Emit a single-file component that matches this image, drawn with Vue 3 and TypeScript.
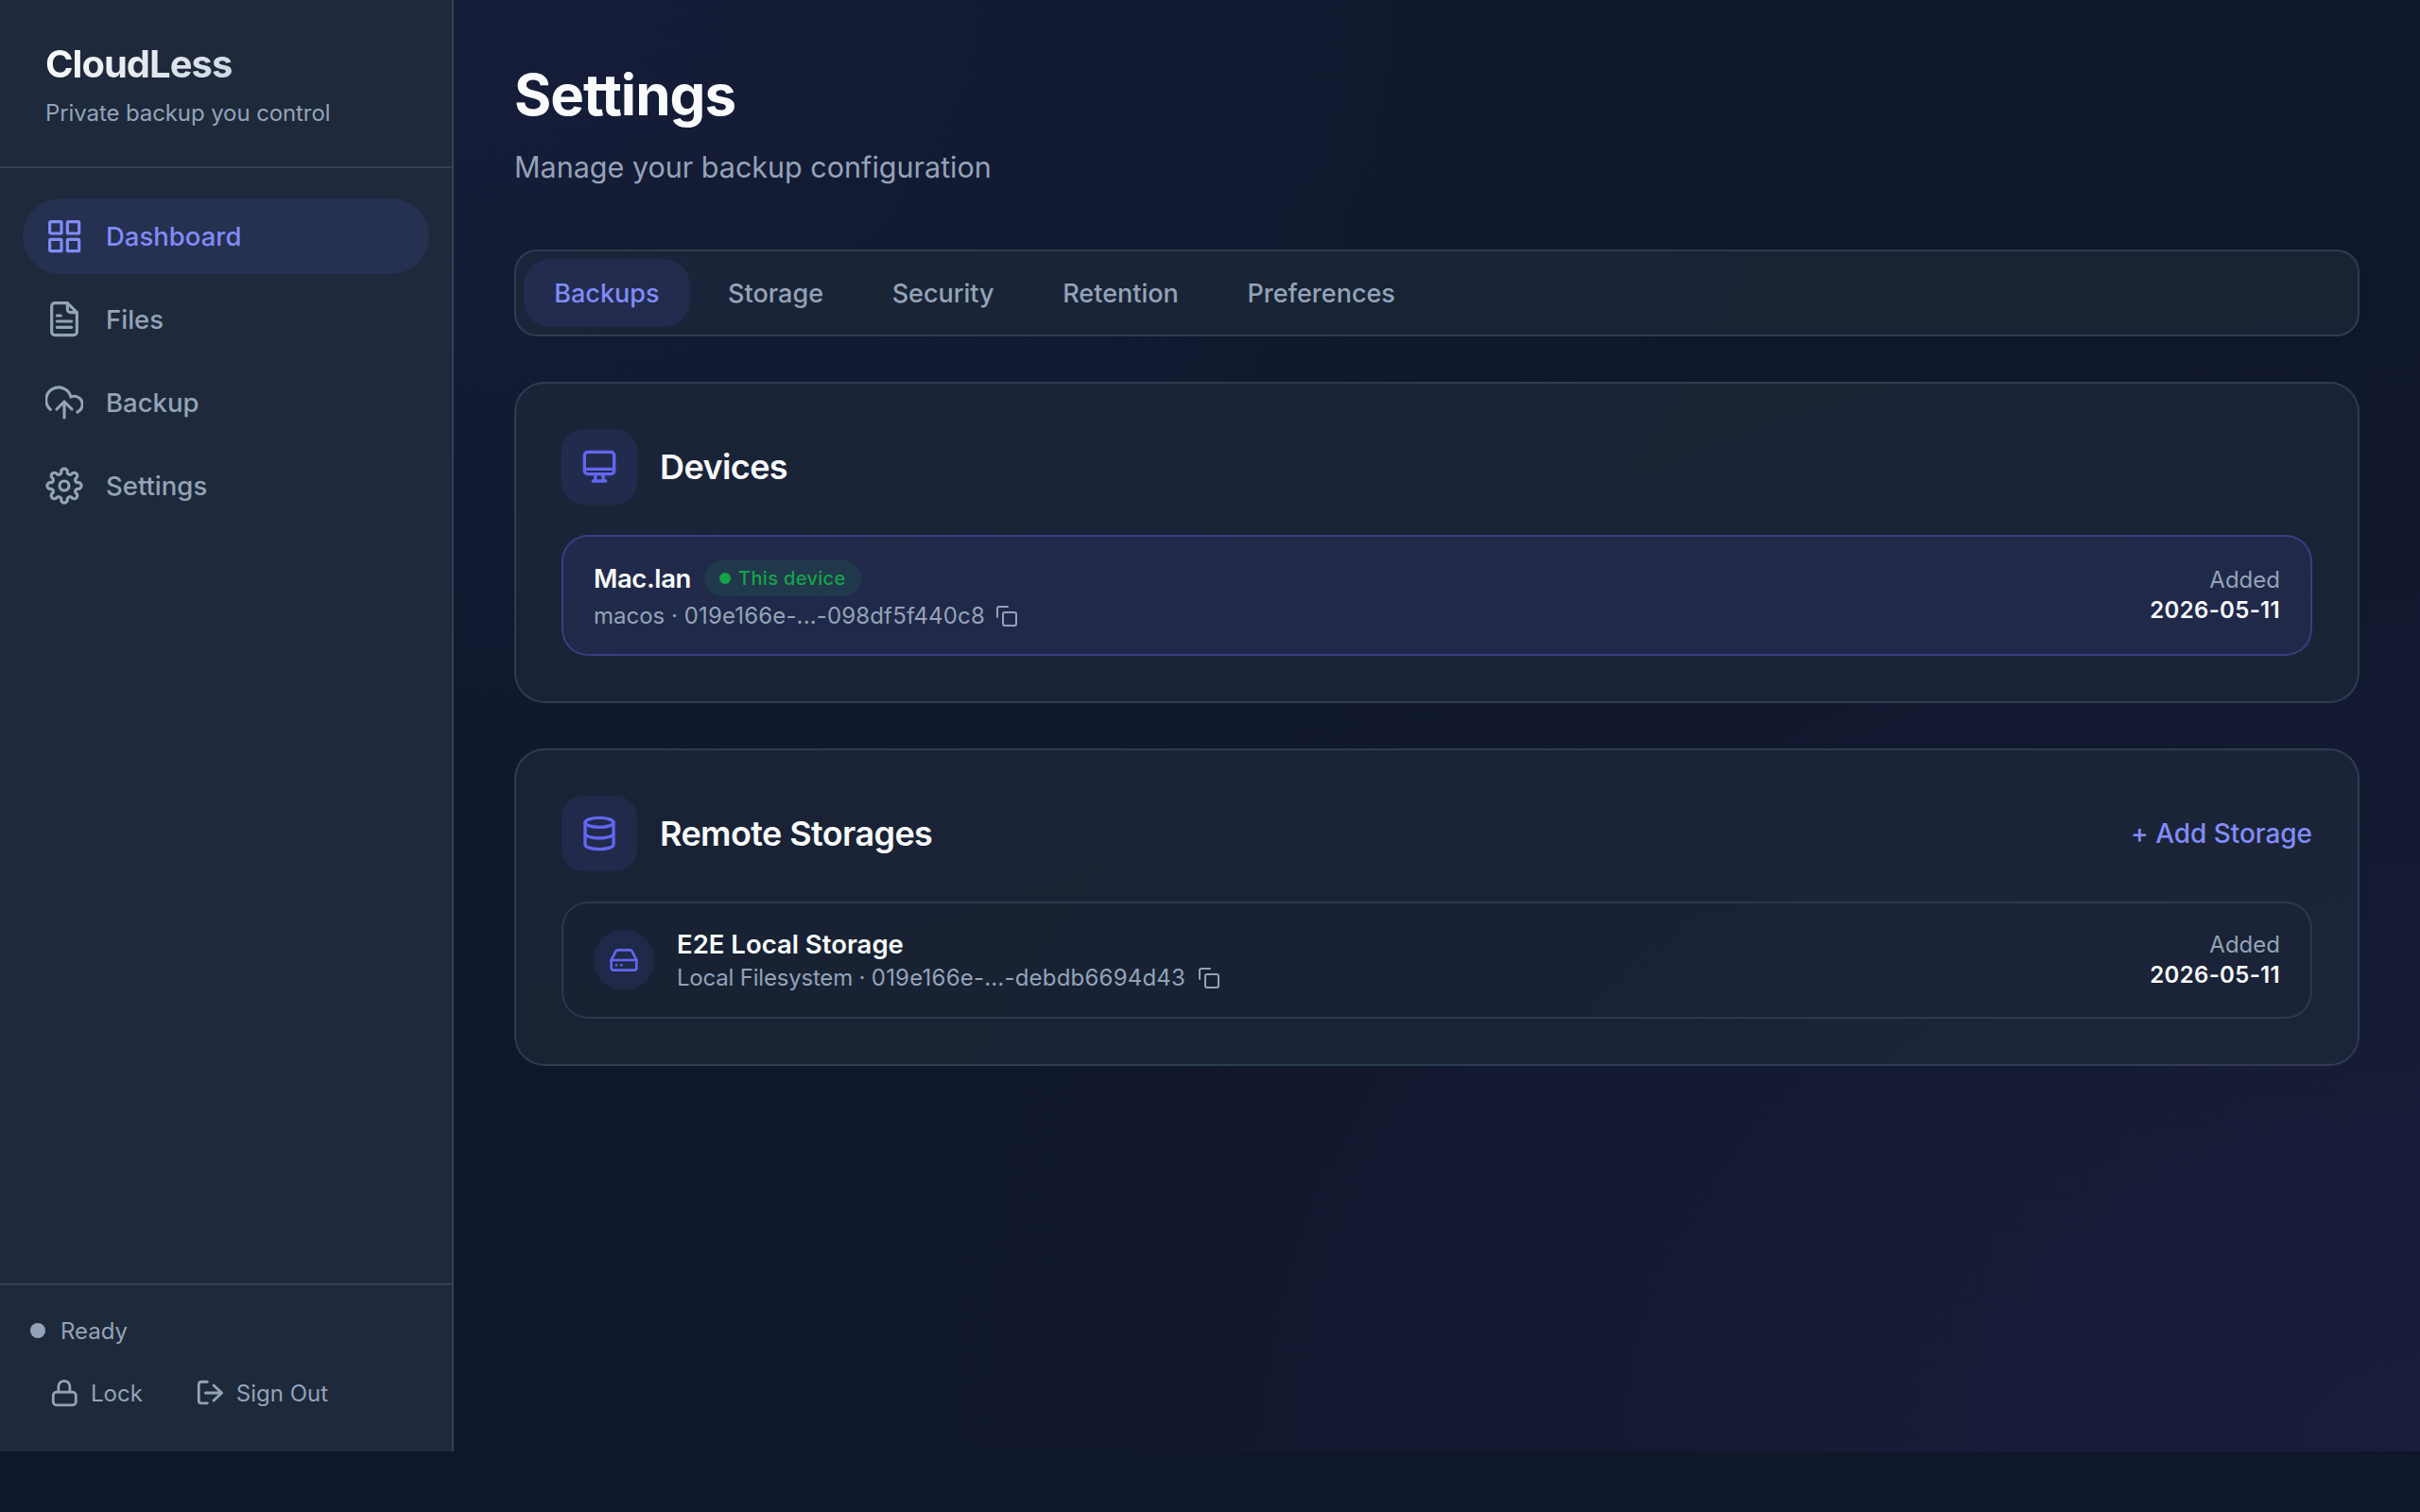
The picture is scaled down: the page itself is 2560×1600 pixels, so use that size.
<script setup lang="ts">
// 8 lobed gear outline, built from arcs around the centre of a 24 box
const polar = (deg: number, r: number) => {
  const a = (deg * Math.PI) / 180
  return `${(12 + r * Math.cos(a)).toFixed(2)} ${(12 + r * Math.sin(a)).toFixed(2)}`
}

const gearPath = () => {
  let d = ''
  for (let i = 0; i < 8; i++) {
    const mid = -90 + i * 45
    d += i === 0 ? `M${polar(mid - 13, 8.5)}` : ''
    d += `A2 2 0 1 1 ${polar(mid + 13, 8.5)}`
    d += `A1.8 1.8 0 0 0 ${polar(mid + 32, 8.5)}`
  }
  return d + 'Z'
}

const tabs = ['Backups', 'Storage', 'Security', 'Retention', 'Preferences']
</script>

<template>
  <div class="app">
    <aside class="sidebar">
      <div class="brand">
        <div class="brand-name">CloudLess</div>
        <div class="brand-sub">Private backup you control</div>
      </div>

      <nav class="nav">
        <a class="nav-item active">
          <svg class="nav-icon" viewBox="0 0 24 24" fill="none" stroke="currentColor" stroke-width="1.9" stroke-linejoin="round">
            <rect x="2.8" y="2.8" width="7.4" height="7.4" rx="0.6" />
            <rect x="14" y="2.8" width="7.4" height="7.4" rx="0.6" />
            <rect x="2.8" y="14" width="7.4" height="7.4" rx="0.6" />
            <rect x="14" y="14" width="7.4" height="7.4" rx="0.6" />
          </svg>
          <span>Dashboard</span>
        </a>
        <a class="nav-item">
          <svg class="nav-icon" viewBox="0 0 24 24" fill="none" stroke="currentColor" stroke-width="1.9" stroke-linecap="round" stroke-linejoin="round">
            <path d="M14 1.6H6a2 2 0 0 0-2 2V20a2 2 0 0 0 2 2h12a2 2 0 0 0 2-2V7.6Z" />
            <path d="M14 1.6v4a2 2 0 0 0 2 2h4" />
            <path d="M7.4 9.6h2.4M7.4 13.2h9.2M7.4 17h9.2" />
          </svg>
          <span>Files</span>
        </a>
        <a class="nav-item">
          <svg class="nav-icon" viewBox="0 0 24 24" fill="none" stroke="currentColor" stroke-width="1.9" stroke-linecap="round" stroke-linejoin="round">
            <path d="M3.2 16.4A8 8 0 1 1 16.2 8.4 5 5 0 0 1 20.4 18" />
            <path d="M12 21.6V11.4M7.2 16.2 12 11.4l4.8 4.8" />
          </svg>
          <span>Backup</span>
        </a>
        <a class="nav-item">
          <svg class="nav-icon" viewBox="0 0 24 24" fill="none" stroke="currentColor" stroke-width="1.9" stroke-linecap="round" stroke-linejoin="round">
            <path :d="gearPath()" />
            <circle cx="12" cy="12" r="3" />
          </svg>
          <span>Settings</span>
        </a>
      </nav>

      <div class="side-footer">
        <div class="status">
          <span class="status-dot"></span>
          <span>Ready</span>
        </div>
        <div class="side-actions">
          <button class="side-btn">
            <svg class="side-icon" viewBox="0 0 24 24" fill="none" stroke="currentColor" stroke-width="2.1" stroke-linecap="round" stroke-linejoin="round">
              <rect x="3.2" y="11.4" width="18" height="10.2" rx="2.5" />
              <path d="M7.4 11.4V7a4.5 4.5 0 0 1 9 0v4.4" />
            </svg>
            <span>Lock</span>
          </button>
          <button class="side-btn">
            <svg class="side-icon" viewBox="0 0 24 24" fill="none" stroke="currentColor" stroke-width="2.1" stroke-linecap="round" stroke-linejoin="round">
              <path d="M10 3.2H5.2a2 2 0 0 0-2 2v12.9a2 2 0 0 0 2 2H10" />
              <path d="M8.5 12h13M15 6l6.5 6-6.5 6" />
            </svg>
            <span>Sign Out</span>
          </button>
        </div>
      </div>
    </aside>

    <main class="main">
      <header class="page-head">
        <h1>Settings</h1>
        <p>Manage your backup configuration</p>
      </header>

      <div class="tabs">
        <button v-for="(tab, i) in tabs" :key="tab" class="tab" :class="{ active: i === 0 }">{{ tab }}</button>
      </div>

      <section class="card">
        <div class="card-head">
          <div class="card-icon">
            <svg viewBox="0 0 24 24" fill="none" stroke="currentColor" stroke-width="2" stroke-linecap="round" stroke-linejoin="round">
              <rect x="2.6" y="2.6" width="18.8" height="14" rx="2" />
              <path d="M2.6 13.4h18.8M9.8 16.6 9.2 21M14.2 16.6l.6 4.4M8 21h8" />
            </svg>
          </div>
          <h2>Devices</h2>
        </div>
        <div class="row current">
          <div class="row-info">
            <div class="row-title">
              <span class="row-name">Mac.lan</span>
              <span class="badge"><i class="badge-dot"></i>This device</span>
            </div>
            <div class="row-sub">
              <span><span class="sub-label">macos · </span><span class="sub-id">019e166e-...-098df5f440c8</span></span>
              <svg class="copy" viewBox="0 0 24 24" fill="none" stroke="currentColor" stroke-width="2" stroke-linecap="round" stroke-linejoin="round">
                <rect x="8" y="8" width="14" height="14" rx="2" />
                <path d="M2 13V4a2 2 0 0 1 2-2h9" />
              </svg>
            </div>
          </div>
          <div class="row-date">
            <span>Added</span>
            <strong>2026-05-11</strong>
          </div>
        </div>
      </section>

      <section class="card">
        <div class="card-head">
          <div class="card-icon">
            <svg viewBox="0 0 24 24" fill="none" stroke="currentColor" stroke-width="2" stroke-linecap="round" stroke-linejoin="round">
              <ellipse cx="12" cy="5" rx="9" ry="3" />
              <path d="M3 5v14a9 3 0 0 0 18 0V5" />
              <path d="M3 12a9 3 0 0 0 18 0" />
            </svg>
          </div>
          <h2>Remote Storages</h2>
          <button class="add-btn">+ Add Storage</button>
        </div>
        <div class="row">
          <div class="row-icon">
            <svg viewBox="0 0 24 24" fill="none" stroke="currentColor" stroke-width="2" stroke-linecap="round" stroke-linejoin="round">
              <path d="M22 12H2" />
              <path d="M5.45 5.11 2 12v6a2 2 0 0 0 2 2h16a2 2 0 0 0 2-2v-6l-3.45-6.89A2 2 0 0 0 16.76 4H7.24a2 2 0 0 0-1.79 1.11Z" />
              <path d="M6 16h.01M10 16h.01" />
            </svg>
          </div>
          <div class="row-info">
            <div class="row-name">E2E Local Storage</div>
            <div class="row-sub">
              <span><span class="sub-label tight">Local Filesystem · </span><span class="sub-id">019e166e-...-debdb6694d43</span></span>
              <svg class="copy" viewBox="0 0 24 24" fill="none" stroke="currentColor" stroke-width="2" stroke-linecap="round" stroke-linejoin="round">
                <rect x="8" y="8" width="14" height="14" rx="2" />
                <path d="M2 13V4a2 2 0 0 1 2-2h9" />
              </svg>
            </div>
          </div>
          <div class="row-date">
            <span>Added</span>
            <strong>2026-05-11</strong>
          </div>
        </div>
      </section>
    </main>
  </div>
</template>

<style>
html,
body {
  margin: 0;
  background: #0f172a;
}
</style>

<style scoped>
.app {
  display: flex;
  height: 1536px;
  font-family: Inter, 'Liberation Sans', sans-serif;
  color: #f1f5f9;
}

.sidebar {
  width: 480px;
  flex-shrink: 0;
  box-sizing: border-box;
  display: flex;
  flex-direction: column;
  background: #1e293b;
  border-right: 2px solid #334155;
}

.brand {
  box-sizing: border-box;
  height: 178px;
  padding: 40px 48px 0;
  border-bottom: 2px solid #334155;
}

.brand-name {
  font-size: 40px;
  line-height: 56px;
  font-weight: 700;
  letter-spacing: -1px;
  background: linear-gradient(135deg, #ffffff, #cbd5e1);
  -webkit-background-clip: text;
  background-clip: text;
  color: transparent;
  width: fit-content;
}

.brand-sub {
  margin-top: 4px;
  font-size: 24px;
  line-height: 40px;
  letter-spacing: -0.1px;
  color: #94a3b8;
}

.nav {
  flex: 1;
  display: flex;
  flex-direction: column;
  gap: 8px;
  padding: 32px 24px;
}

.nav-item {
  display: flex;
  align-items: center;
  gap: 24px;
  height: 80px;
  padding: 0 24px;
  border-radius: 40px;
  font-size: 27.5px;
  font-weight: 500;
  color: #94a3b8;
}

.nav-item.active {
  background: rgba(99, 102, 241, 0.12);
  color: #818cf8;
}

.nav-icon {
  width: 40px;
  height: 40px;
  flex-shrink: 0;
}

.side-footer {
  box-sizing: border-box;
  height: 178px;
  padding: 32px 32px 0;
  border-top: 2px solid #334155;
}

.status {
  display: flex;
  align-items: center;
  gap: 16px;
  height: 32px;
  font-size: 24px;
  color: #94a3b8;
}

.status-dot {
  width: 16px;
  height: 16px;
  border-radius: 50%;
  background: #94a3b8;
}

.side-actions {
  display: flex;
  gap: 15px;
  margin-top: 26px;
}

.side-btn {
  display: flex;
  align-items: center;
  gap: 12px;
  height: 48px;
  padding: 0 20px;
  border: none;
  background: none;
  font-family: inherit;
  font-size: 24px;
  color: #94a3b8;
}

.side-icon {
  width: 32px;
  height: 32px;
}

.main {
  flex: 1;
  min-width: 0;
  box-sizing: border-box;
  padding: 64px;
  background:
    radial-gradient(ellipse 70% 70% at 0% 0%, rgba(99, 102, 241, 0.08), transparent 100%),
    radial-gradient(ellipse 80% 80% at 100% 100%, rgba(139, 92, 246, 0.09), transparent 100%),
    #0f172a;
}

.page-head {
  margin-bottom: 63px;
}

.page-head h1 {
  margin: 0;
  font-size: 60px;
  line-height: 72px;
  font-weight: 700;
  letter-spacing: -1px;
  color: #f8fafc;
}

.page-head p {
  margin: 17px 0 0;
  font-size: 30.5px;
  line-height: 48px;
  color: #94a3b8;
}

.tabs {
  display: flex;
  gap: 8px;
  padding: 8px;
  margin-bottom: 48px;
  border: 2px solid rgba(51, 65, 85, 0.85);
  border-radius: 24px;
  background: rgba(30, 41, 59, 0.65);
}

.tab {
  height: 72px;
  padding: 0 32.3px;
  border: none;
  border-radius: 28px;
  background: none;
  font-family: inherit;
  font-size: 27px;
  font-weight: 500;
  color: #94a3b8;
}

.tab.active {
  background: rgba(99, 102, 241, 0.12);
  color: #818cf8;
}

.card {
  padding: 48px;
  margin-bottom: 48px;
  border: 2px solid rgba(51, 65, 85, 0.85);
  border-radius: 32px;
  background: rgba(30, 41, 59, 0.65);
}

.card-head {
  display: flex;
  align-items: center;
  gap: 24px;
  margin-bottom: 32px;
}

.card-icon {
  display: flex;
  align-items: center;
  justify-content: center;
  width: 80px;
  height: 80px;
  border-radius: 24px;
  background: rgba(99, 102, 241, 0.12);
  color: #6366f1;
}

.card-icon svg {
  width: 40px;
  height: 40px;
}

.card-head h2 {
  margin: 0;
  font-size: 36px;
  font-weight: 600;
  letter-spacing: -0.6px;
  color: #f8fafc;
}

.add-btn {
  margin-left: auto;
  padding: 0;
  border: none;
  background: none;
  font-family: inherit;
  font-size: 28px;
  font-weight: 500;
  letter-spacing: -0.05px;
  color: #818cf8;
}

.row {
  display: flex;
  align-items: center;
  gap: 24px;
  padding: 25px 32px;
  border: 2px solid rgba(51, 65, 85, 0.75);
  border-radius: 28px;
  background: rgba(15, 23, 42, 0.05);
}

.row.current {
  padding: 25px 32px 24px;
  background: rgba(99, 102, 241, 0.1);
  border-color: rgba(99, 102, 241, 0.35);
}

.row-icon {
  display: flex;
  align-items: center;
  justify-content: center;
  width: 64px;
  height: 64px;
  flex-shrink: 0;
  border-radius: 50%;
  background: rgba(99, 102, 241, 0.12);
  color: #6366f1;
}

.row-icon svg {
  width: 32px;
  height: 32px;
}

.row-info {
  flex: 1;
  min-width: 0;
}

.row-title {
  display: flex;
  align-items: center;
  gap: 14px;
}

.row-name {
  font-size: 27.5px;
  line-height: 36px;
  font-weight: 600;
  color: #f8fafc;
}

.row-title .row-name {
  letter-spacing: -0.4px;
}

.badge {
  display: inline-flex;
  align-items: center;
  gap: 8px;
  height: 38px;
  padding: 0 16px;
  border-radius: 19px;
  background: rgba(34, 197, 94, 0.1);
  font-size: 20px;
  font-weight: 500;
  letter-spacing: 0.35px;
  color: #16a34a;
}

.badge-dot {
  width: 12px;
  height: 12px;
  border-radius: 50%;
  background: #16a34a;
}

.row-sub {
  display: flex;
  align-items: center;
  gap: 13px;
  margin-top: 2px;
  font-size: 24px;
  line-height: 32px;
  color: #94a3b8;
}

.row.current .row-sub {
  gap: 11px;
  margin-top: 5px;
}

.sub-label.tight {
  letter-spacing: -0.2px;
}

.sub-id {
  letter-spacing: 0.2px;
}

.row.current .sub-id {
  letter-spacing: 0.15px;
}

.copy {
  width: 24px;
  height: 24px;
}

.row-date {
  display: flex;
  flex-direction: column;
  align-items: flex-end;
  font-size: 24px;
  line-height: 32px;
  color: #94a3b8;
}

.row.current .row-date {
  margin-top: -2px;
}

.row-date strong {
  font-weight: 600;
  letter-spacing: 0.3px;
  color: #f8fafc;
}
</style>
